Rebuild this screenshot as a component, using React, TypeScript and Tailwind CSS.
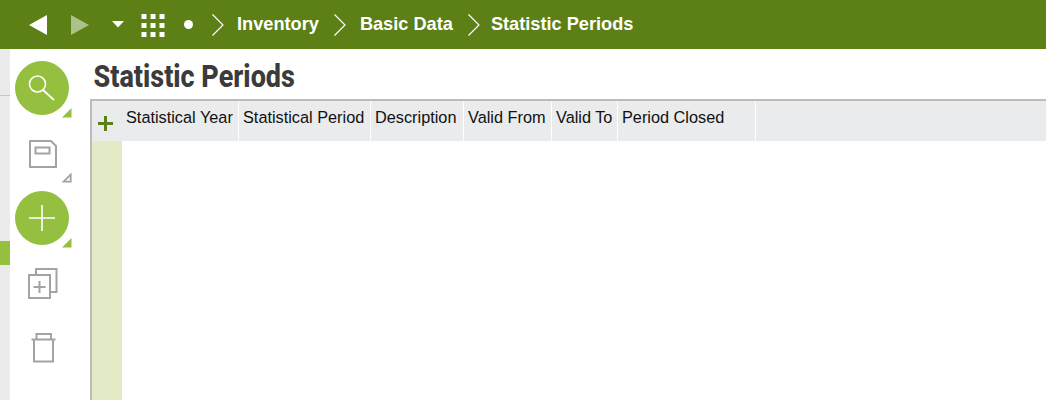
import React from "react";

const Chevron = () => (
  <svg width="14" height="24" viewBox="0 0 14 24" className="shrink-0" fill="none" stroke="#fff" strokeWidth="1.2">
    <path d="M1.5 1.5 L12 12 L1.5 22.5" />
  </svg>
);

const Corner = ({ color, hollow }: { color: string; hollow?: boolean }) => (
  <svg width="10" height="10" viewBox="0 0 10 10" className="absolute right-0 bottom-0">
    {hollow ? (
      <path d="M1.5 8.7 L8.7 8.7 L8.7 1.5 Z" fill="none" stroke={color} strokeWidth="1.8" />
    ) : (
      <path d="M0 9.5 L9.5 9.5 L9.5 0 Z" fill={color} />
    )}
  </svg>
);

const columns: [string, string][] = [
  ["Statistical Year", "w-[117px]"],
  ["Statistical Period", "w-[132px]"],
  ["Description", "w-[93px]"],
  ["Valid From", "w-[88px]"],
  ["Valid To", "w-[66px]"],
  ["Period Closed", "w-[138px]"],
];

export default function App() {
  return (
    <div className="w-[1046px] h-[400px] overflow-hidden bg-white flex flex-col font-['Liberation_Sans',Arial,sans-serif]">
      <header className="h-[49px] shrink-0 bg-[#5c7f16] flex items-center text-white">
        <svg width="19" height="22" viewBox="0 0 19 22" className="ml-[29px] shrink-0"><path d="M0 11 L18 1 L18 21 Z" fill="#fff" /></svg>
        <svg width="19" height="22" viewBox="0 0 19 22" className="ml-[23px] shrink-0"><path d="M0 1 L18 11 L0 21 Z" fill="#adc18a" /></svg>
        <svg width="12" height="7" viewBox="0 0 12 7" className="ml-[22px] shrink-0"><path d="M0 0 L12 0 L6 6.5 Z" fill="#fff" /></svg>
        <svg width="24" height="24" viewBox="0 0 24 24" className="ml-[17px] shrink-0" fill="#fff">
          <rect x="0.5" y="1" width="5" height="5" /><rect x="9.5" y="1" width="5" height="5" /><rect x="18.5" y="1" width="5" height="5" />
          <rect x="0.5" y="10" width="5" height="5" /><rect x="9.5" y="10" width="5" height="5" /><rect x="18.5" y="10" width="5" height="5" />
          <rect x="0.5" y="19" width="5" height="5" /><rect x="9.5" y="19" width="5" height="5" /><rect x="18.5" y="19" width="5" height="5" />
        </svg>
        <span className="ml-[19px] w-[9px] h-[9px] rounded-full bg-white shrink-0" />
        <span className="ml-[18px] flex"><Chevron /></span>
        <span className="ml-[12px] text-[18.2px] font-bold">Inventory</span>
        <span className="ml-[14px] flex"><Chevron /></span>
        <span className="ml-[13px] text-[18.2px] font-bold">Basic Data</span>
        <span className="ml-[14px] flex"><Chevron /></span>
        <span className="ml-[10px] text-[18.2px] font-bold">Statistic Periods</span>
      </header>

      <div className="flex-1 flex min-h-0">
        <div className="w-[10px] shrink-0 bg-[#e9ebed] flex flex-col">
          <div className="h-[47px] border-b border-[#c4c6c8]" />
          <div className="h-[145px]" />
          <div className="h-[24px] bg-[#95bf3e]" />
        </div>

        <aside className="w-[80px] shrink-0 bg-white flex flex-col">
          <div className="relative mt-[12px] ml-[5px] w-[57px] h-[57px]">
            <div className="w-[54px] h-[54px] rounded-full bg-[#95bf3e] flex items-center justify-center">
              <svg width="28" height="28" viewBox="0 0 28 28" fill="none" stroke="#fff" strokeWidth="1.6">
                <circle cx="9.5" cy="10" r="8" />
                <path d="M15 16 L26 26" strokeWidth="1.8" />
              </svg>
            </div>
            <Corner color="#95bf3e" />
          </div>
          <div className="relative ml-[5px] mt-[6px] w-[57px] h-[59px]">
            <svg width="28" height="28" viewBox="0 0 28 28" className="absolute left-[14px] top-[16px]" fill="none" stroke="#a3a3a3" strokeWidth="2">
              <path d="M1 1 H22 L27 6 V27 H1 Z" />
              <rect x="6.5" y="7.5" width="14" height="6" />
            </svg>
            <Corner color="#a3a3a3" hollow />
          </div>
          <div className="relative ml-[5px] mt-[8px] w-[57px] h-[57px]">
            <div className="w-[54px] h-[54px] rounded-full bg-[#95bf3e] flex items-center justify-center">
              <svg width="26" height="26" viewBox="0 0 26 26" fill="none" stroke="#fff" strokeWidth="1.6">
                <path d="M13 0 V26 M0 13 H26" />
              </svg>
            </div>
            <Corner color="#95bf3e" />
          </div>
          <svg width="30" height="31" viewBox="0 0 30 31" className="ml-[18px] mt-[20px]" fill="none" stroke="#a3a3a3" strokeWidth="2">
            <path d="M8 6 V1 H28.5 V24 H23" />
            <rect x="1" y="7" width="21" height="23" />
            <path d="M11.5 13 V25 M5.5 19 H17.5" />
          </svg>
          <svg width="26" height="30" viewBox="0 0 26 30" className="ml-[21px] mt-[34px]" fill="none" stroke="#a3a3a3" strokeWidth="2">
            <path d="M0.5 6.5 H24.5" />
            <path d="M3 6.5 V28.5 H22 V6.5" />
            <path d="M5.5 6.5 V1 H20 V6.5" />
          </svg>
        </aside>

        <main className="flex-1 min-w-0 flex flex-col">
          <h1 className="h-[50px] shrink-0 pl-[4px] pt-[9px] text-[31px] leading-[38px] font-extrabold text-[#3b3b3b] whitespace-nowrap origin-left scale-x-[0.87] font-['Roboto',sans-serif]">
            Statistic Periods
          </h1>
          <div className="flex-1 border-l-2 border-t-2 border-[#bcbcbc] flex flex-col min-h-0">
            <div className="h-[40px] shrink-0 bg-[#e9ebed] flex">
              <div className="w-[30px] shrink-0 flex items-end justify-start pb-[10px] pl-[6px]">
                <svg width="15" height="15" viewBox="0 0 15 15" fill="none" stroke="#5c7f16" strokeWidth="3">
                  <path d="M7.5 0 V15 M0 7.5 H15" />
                </svg>
              </div>
              {columns.map(([label, w]) => (
                <div key={label} className={`${w} shrink-0 border-r border-white pl-[4px] pt-[6px] text-[16.3px] leading-[20px] text-[#111111] whitespace-nowrap`}>
                  {label}
                </div>
              ))}
            </div>
            <div className="flex-1 flex">
              <div className="w-[30px] bg-[#e2ebc5]" />
            </div>
          </div>
        </main>
      </div>
    </div>
  );
}
